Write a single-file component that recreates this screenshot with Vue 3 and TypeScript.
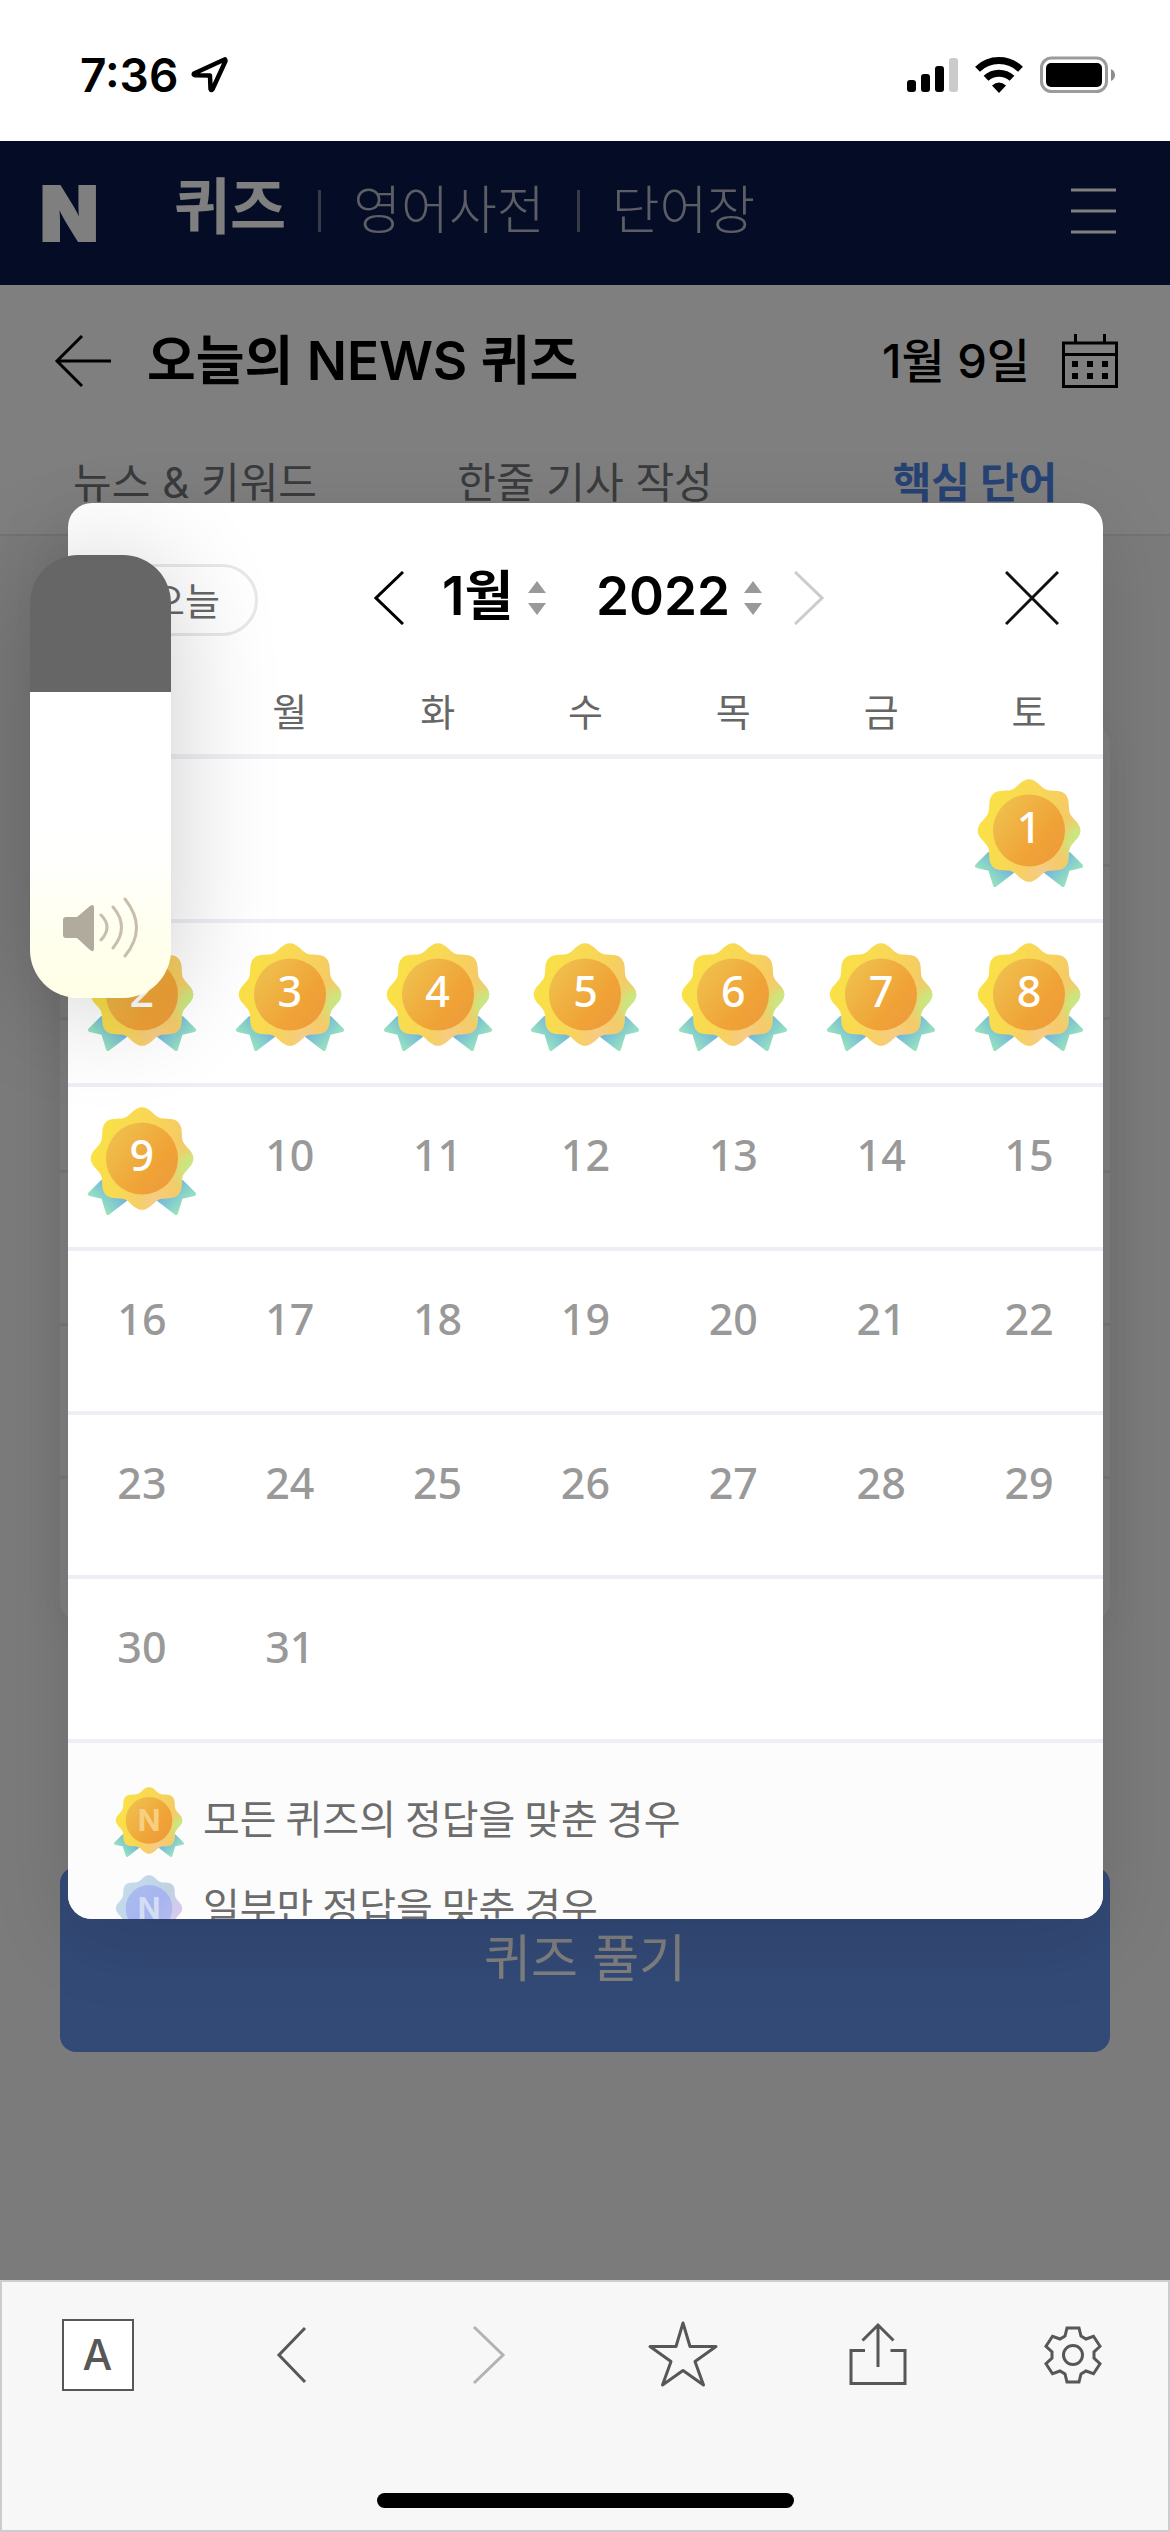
<script setup lang="ts">
import { computed, ref } from 'vue'

const weekdays = ['일', '월', '화', '수', '목', '금', '토']
const month = ref(1)
const year = ref(2022)
const volume = ref(69)
const lastSolvedDay = 9

const weeks = computed(() => {
  const offset = new Date(year.value, month.value - 1, 1).getDay()
  const total = new Date(year.value, month.value, 0).getDate()
  const cells: (number | null)[] = Array(offset).fill(null)
  for (let d = 1; d <= total; d++) cells.push(d)
  while (cells.length % 7) cells.push(null)
  const rows: (number | null)[][] = []
  for (let i = 0; i < cells.length; i += 7) rows.push(cells.slice(i, i + 7))
  return rows
})

// Eight-lobed rosette outline around (54, 51)
const rosette = Array.from({ length: 120 }, (_, i) => {
  const a = (i / 120) * Math.PI * 2
  const r = 47.8 + 3.5 * Math.cos(8 * a)
  return `${(54 + r * Math.cos(a)).toFixed(2)},${(51.5 + r * Math.sin(a)).toFixed(2)}`
}).join(' ')

const volumeFill = computed(() => ({
  background: `linear-gradient(to top, #ffffe6 0%, #ffffef 15%, #fffffd 31%, #fff 40%, #fff ${volume.value}%, #666 ${volume.value}%)`,
}))
</script>

<template>
  <div class="screen">
    <svg class="defs" width="0" height="0" aria-hidden="true">
      <defs>
        <linearGradient id="gold-leaf" x1="0" y1="0.3" x2="1" y2="0.6">
          <stop offset="0" stop-color="#fae343" />
          <stop offset="0.5" stop-color="#f8d657" />
          <stop offset="0.85" stop-color="#f5c967" />
        </linearGradient>
        <radialGradient id="gold-green" gradientUnits="userSpaceOnUse" cx="106" cy="62" r="32">
          <stop offset="0" stop-color="#b9f089" />
          <stop offset="0.4" stop-color="#c9e880" stop-opacity="0.8" />
          <stop offset="1" stop-color="#f5cb66" stop-opacity="0" />
        </radialGradient>
        <radialGradient id="gold-peach" gradientUnits="userSpaceOnUse" cx="66" cy="92" r="34">
          <stop offset="0" stop-color="#f6cc88" />
          <stop offset="1" stop-color="#f6cc66" stop-opacity="0" />
        </radialGradient>
        <linearGradient id="gold-core" x1="0" y1="0.1" x2="0.9" y2="0.8">
          <stop offset="0" stop-color="#efc350" />
          <stop offset="0.75" stop-color="#f0a236" />
          <stop offset="1" stop-color="#ee9d3a" />
        </linearGradient>
        <linearGradient id="tail-left" x1="0.9" y1="0.3" x2="0.2" y2="0.9">
          <stop offset="0.1" stop-color="#72b6dc" />
          <stop offset="1" stop-color="#9febb8" />
        </linearGradient>
        <linearGradient id="tail-right" x1="0.1" y1="0.3" x2="0.8" y2="0.9">
          <stop offset="0.1" stop-color="#72b6dc" />
          <stop offset="1" stop-color="#9febb8" />
        </linearGradient>
        <linearGradient id="silver-leaf" x1="0" y1="0" x2="1" y2="0.6">
          <stop offset="0" stop-color="#c6deef" />
          <stop offset="0.7" stop-color="#bfd2e2" />
          <stop offset="1" stop-color="#dcc8f2" />
        </linearGradient>
        <linearGradient id="silver-core" x1="0" y1="0" x2="1" y2="0.8">
          <stop offset="0" stop-color="#a9bdf0" />
          <stop offset="0.6" stop-color="#a8b4f0" />
          <stop offset="1" stop-color="#b4bcee" />
        </linearGradient>
        <symbol id="badge-gold" viewBox="0 0 108 108">
          <path d="M14 75 2 87l13 3 5 16 17-13Z" fill="url(#tail-left)" stroke="url(#tail-left)" stroke-width="4" stroke-linejoin="round" />
          <path d="m94 75 12 12-13 3-5 16-17-13Z" fill="url(#tail-right)" stroke="url(#tail-right)" stroke-width="4" stroke-linejoin="round" />
          <polygon :points="rosette" fill="url(#gold-leaf)" />
          <polygon :points="rosette" fill="url(#gold-peach)" />
          <polygon :points="rosette" fill="url(#gold-green)" />
          <circle cx="54" cy="51.5" r="36" fill="url(#gold-core)" />
        </symbol>
        <symbol id="badge-silver" viewBox="0 0 108 108">
          <polygon :points="rosette" fill="url(#silver-leaf)" />
          <circle cx="54" cy="51.5" r="36" fill="url(#silver-core)" />
        </symbol>
      </defs>
    </svg>

    <div class="status">
      <span class="clock">7:36</span>
      <svg class="locate" width="40" height="40" viewBox="0 0 40 40" aria-hidden="true">
        <path d="M34.500 4.500 4 18.500q-1 1.500 1 1.700L20 20.500 20.500 34q.5 2 2 .3L35.500 6q0-2-1-1.500Z" fill="none" stroke="#000" stroke-width="4.500" stroke-linejoin="round" />
      </svg>
      <svg class="signal" width="52" height="36" viewBox="0 0 52 36" aria-hidden="true">
        <rect x="0" y="23" width="9" height="12" rx="3" />
        <rect x="14" y="17" width="9" height="18" rx="3" />
        <rect x="28" y="9" width="9" height="26" rx="3" />
        <rect x="42" y="1" width="9" height="34" rx="3" fill="#cbcbcb" />
      </svg>
      <svg class="wifi" width="50" height="38" viewBox="0 0 50 38" aria-hidden="true">
        <path d="M3.500 13.200a31 31 0 0 1 43 0" fill="none" stroke="#000" stroke-width="7" />
        <path d="M12 22.300a19 19 0 0 1 26 0" fill="none" stroke="#000" stroke-width="7" />
        <path d="M18 29.500q7-6 14 0L25 37Z" />
      </svg>
      <svg class="battery" width="76" height="38" viewBox="0 0 76 38" aria-hidden="true">
        <rect x="1.500" y="2" width="65" height="33.500" rx="10" fill="none" stroke="#9b9b9b" stroke-width="3" />
        <rect x="6" y="7" width="56" height="24" rx="5" />
        <path d="M71 13q4 2 4 6t-4 6Z" fill="#8c8c8c" />
      </svg>
    </div>

    <div class="page">
      <header class="topbar">
        <a class="logo" href="#">N</a>
        <nav class="services">
          <a class="current" href="#">퀴즈</a>
          <a href="#">영어사전</a>
          <a href="#">단어장</a>
        </nav>
        <button class="plain menu" type="button" aria-label="메뉴">
          <svg width="45" height="46" viewBox="0 0 45 46"><path d="M0 2h45M0 23h45M0 44h45" stroke="#fff" stroke-width="3" /></svg>
        </button>
      </header>

      <div class="title-row">
        <a class="back" href="#" aria-label="뒤로">
          <svg width="58" height="54" viewBox="0 0 58 54"><path d="M28 2 3 27l25 25M3 27h54" fill="none" stroke="#000" stroke-width="3" /></svg>
        </a>
        <h1>오늘의 NEWS 퀴즈</h1>
        <span class="date">1월 9일</span>
        <button class="plain" type="button" aria-label="달력 열기">
          <svg width="56" height="54" viewBox="0 0 56 54">
            <path d="M1.500 9h53v43.500h-53ZM1.500 20.500h53M13.500 0v9M42.500 0v9" fill="none" stroke="#000" stroke-width="3" />
            <path d="M10 27h6v6h-6zM25 27h6v6h-6zM40 27h6v6h-6zM10 39h6v6h-6zM25 39h6v6h-6zM40 39h6v6h-6z" />
          </svg>
        </button>
      </div>

      <nav class="tabs">
        <a href="#">뉴스 &amp; 키워드</a>
        <a href="#">한줄 기사 작성</a>
        <a class="current" href="#">핵심 단어</a>
      </nav>

      <main class="content">
        <ul class="words">
          <li v-for="n in 6" :key="n"></li>
        </ul>
        <button class="solve" type="button">퀴즈 풀기</button>
      </main>

      <div class="dim">
        <section class="dialog" role="dialog" aria-label="달력">
          <div class="picker">
            <button class="today" type="button">오늘</button>
            <div class="period">
              <button class="plain" type="button" aria-label="이전 달">
                <svg width="30" height="54" viewBox="0 0 30 54"><path d="M29 1 2 27l27 26" fill="none" stroke="#000" stroke-width="3" /></svg>
              </button>
              <label class="choice month">
                <select v-model="month" aria-label="월">
                  <option v-for="m in 12" :key="m" :value="m">{{ m }}월</option>
                </select>
                <svg width="18" height="34" viewBox="0 0 18 34" aria-hidden="true"><path d="m9 0 9 12H0ZM9 34l9-12H0Z" fill="#999" /></svg>
              </label>
              <label class="choice year">
                <select v-model="year" aria-label="연도">
                  <option :value="2022">2022</option>
                  <option :value="2021">2021</option>
                </select>
                <svg width="18" height="34" viewBox="0 0 18 34" aria-hidden="true"><path d="m9 0 9 12H0ZM9 34l9-12H0Z" fill="#999" /></svg>
              </label>
              <button class="plain" type="button" aria-label="다음 달" disabled>
                <svg width="30" height="54" viewBox="0 0 30 54"><path d="m1 1 27 26L1 53" fill="none" stroke="#ccc" stroke-width="3" /></svg>
              </button>
            </div>
            <button class="plain close" type="button" aria-label="닫기">
              <svg width="54" height="54" viewBox="0 0 54 54"><path d="m1 1 52 52M53 1 1 53" fill="none" stroke="#111" stroke-width="3" /></svg>
            </button>
          </div>

          <table class="calendar">
            <thead>
              <tr>
                <th v-for="w in weekdays" :key="w" scope="col">{{ w }}</th>
              </tr>
            </thead>
            <tbody>
              <tr v-for="(week, i) in weeks" :key="i">
                <td v-for="(day, j) in week" :key="j">
                  <div v-if="day" class="day" :class="{ solved: day <= lastSolvedDay }">
                    <svg v-if="day <= lastSolvedDay" class="badge" aria-hidden="true"><use href="#badge-gold" /></svg>
                    <span>{{ day }}</span>
                  </div>
                </td>
              </tr>
            </tbody>
          </table>

          <ul class="legend">
            <li>
              <svg class="mark" viewBox="0 0 108 108" aria-hidden="true">
                <use href="#badge-gold" />
                <text class="mark-letter" x="54" y="68" fill="#f8cf80">N</text>
              </svg>
              <span>모든 퀴즈의 정답을 맞춘 경우</span>
            </li>
            <li>
              <svg class="mark" viewBox="0 0 108 108" aria-hidden="true">
                <use href="#badge-silver" />
                <text class="mark-letter" x="54" y="68" fill="#d3ddf3">N</text>
              </svg>
              <span>일부만 정답을 맞춘 경우</span>
            </li>
          </ul>
        </section>
      </div>
    </div>

    <div class="volume">
      <input v-model.number="volume" type="range" min="0" max="100" aria-label="음량" :style="volumeFill" />
      <svg width="80" height="64" viewBox="0 0 80 64" aria-hidden="true">
        <path d="M3 21h11L27 10q4-3 4 2v40q0 5-4 2L14 42H3q-3 0-3-3V24q0-3 3-3Z" fill="#b0ab9c" />
        <path d="M38 19q12 12 0 25M50 11q17 20 0 41M62 3q23 29 0 57" fill="none" stroke="#c6bfae" stroke-width="3" stroke-linecap="round" />
      </svg>
    </div>

    <footer class="toolbar">
      <div class="tools">
        <button class="plain" type="button"><span class="letter">A</span></button>
        <button class="plain" type="button" aria-label="뒤로 가기">
          <svg width="72" height="72" viewBox="0 0 72 72"><path d="M48 9 22 36l26 27" fill="none" stroke="#575757" stroke-width="3" /></svg>
        </button>
        <button class="plain" type="button" aria-label="앞으로 가기" disabled>
          <svg width="72" height="72" viewBox="0 0 72 72"><path d="m22 8 29 28-29 28" fill="none" stroke="#b3b3b3" stroke-width="3" /></svg>
        </button>
        <button class="plain" type="button" aria-label="즐겨찾기">
          <svg width="72" height="72" viewBox="0 0 72 72"><path d="m36 4 7 23.500h26L48 42.500 56.500 66 36 51.500 15.500 66 24 42.500 3 27.500h26Z" fill="none" stroke="#575757" stroke-width="3" stroke-linejoin="round" /></svg>
        </button>
        <button class="plain" type="button" aria-label="공유">
          <svg width="72" height="72" viewBox="0 0 72 72"><path d="M23 31.500H9v33h54v-33H48.500M36 48V6M20.500 21.500 36 6l15.500 15.500" fill="none" stroke="#575757" stroke-width="3" /></svg>
        </button>
        <button class="plain" type="button" aria-label="설정">
          <svg width="60" height="60" viewBox="0 0 60 60" fill="none" stroke="#575757" stroke-width="3">
            <path d="m24 3h12l2 8 5 3 7.500-2.700 6.500 10-6 5.700v6l6 5.700-6.500 10L43 46l-5 3-2 8H24l-2-8-5-3-7.500 2.700-6.500-10L9 33v-6l-6-5.700 6.500-10L17 14l5-3Z" />
            <circle cx="30" cy="30" r="9.500" />
          </svg>
        </button>
      </div>
      <div class="home-bar"></div>
    </footer>
  </div>
</template>

<style>
body {
  margin: 0;
  background: #fff;
}
</style>

<style scoped>
* {
  box-sizing: border-box;
}

.screen {
  position: relative;
  display: flex;
  flex-direction: column;
  height: 100vh;
  font-family: Inter, "Noto Sans CJK KR", sans-serif;
  color: #000;
}

.defs {
  position: absolute;
}

svg {
  display: block;
  flex: none;
}

a {
  color: inherit;
  text-decoration: none;
}

button,
select {
  font-family: inherit;
}

.plain {
  display: flex;
  align-items: center;
  justify-content: center;
  padding: 0;
  border: 0;
  background: none;
}

ul {
  margin: 0;
  padding: 0;
  list-style: none;
}

.status {
  display: flex;
  align-items: center;
  flex: none;
  height: 141px;
  padding: 8px 54px 0 80px;
}

.clock {
  font-size: 46px;
  font-weight: 600;
  line-height: 56px;
}

.locate {
  margin-left: 12px;
}

.signal {
  margin-left: auto;
}

.wifi {
  margin-left: 15px;
}

.battery {
  margin-left: 16px;
}

.page {
  position: relative;
  flex: 1;
  min-height: 0;
  overflow: hidden;
  background: #f6f6f7;
}

.topbar {
  display: flex;
  align-items: center;
  height: 144px;
  padding: 0 54px 4px 40px;
  background: #0a184c;
  color: #fff;
}

.logo {
  width: 134px;
  padding-top: 4px;
  font-size: 76px;
  font-weight: 900;
  line-height: 80px;
  -webkit-text-stroke: 2px #fff;
}

.services {
  display: flex;
  align-items: center;
}

.services a {
  font-size: 52px;
  font-weight: 300;
  line-height: 60px;
  color: #b8bbca;
}

.services a + a {
  display: flex;
  align-items: center;
}

.services a + a::before {
  content: "";
  width: 3px;
  height: 42px;
  margin: 0 32px;
  background: #70758f;
}

.services a.current {
  padding-bottom: 8px;
  font-size: 61px;
  font-weight: 700;
  color: #fff;
}

.menu {
  margin-left: auto;
}

.title-row {
  display: flex;
  align-items: center;
  height: 152px;
  padding: 0 52px 0 54px;
  background: #fff;
}

h1 {
  margin: 0 auto 0 35px;
  font-size: 53px;
  font-weight: 600;
  line-height: 60px;
}

.date {
  margin-right: 32px;
  font-size: 47px;
  font-weight: 500;
  line-height: 60px;
}

.tabs {
  display: flex;
  height: 99px;
  border-bottom: 2px solid #e4e6e8;
  background: #fff;
}

.tabs a {
  flex: 1;
  font-size: 42px;
  line-height: 92px;
  text-align: center;
  color: #74767a;
}

.tabs a.current {
  font-weight: 700;
  color: #4e86e8;
}

.content {
  padding: 189px 60px 0;
}

.words {
  border-radius: 20px;
  background: #fff;
  box-shadow: 0 8px 40px rgba(0, 0, 20, 0.06);
}

.words li {
  height: 153px;
  border-bottom: 3px solid #eceef0;
}

.words li:first-child {
  height: 142px;
}

.words li:last-child {
  height: 142px;
  border-bottom: 0;
}

.solve {
  width: 100%;
  height: 185px;
  margin-top: 246px;
  padding: 0 0 10px;
  border: 0;
  border-radius: 16px;
  background: #6694ee;
  font-size: 51px;
  font-weight: 400;
  color: #fff;
}

.dim {
  position: absolute;
  inset: 0;
  padding: 362px 67px 361px 68px;
  background: rgba(0, 0, 0, 0.5);
}

.dialog {
  height: 100%;
  overflow: hidden;
  border-radius: 24px;
  background: #fff;
  box-shadow: 0 20px 80px rgba(0, 0, 0, 0.12);
}

.picker {
  display: flex;
  align-items: center;
  padding: 61px 44px 30px;
}

.today {
  width: 146px;
  height: 72px;
  padding: 0 0 4px;
  border: 3px solid #e6e8eb;
  border-radius: 36px;
  background: #fff;
  font-size: 38px;
  color: #666;
}

.period {
  display: flex;
  align-items: center;
  height: 72px;
  margin-left: 116px;
  padding-bottom: 4px;
}

.choice {
  display: flex;
  align-items: center;
}

.choice.month {
  margin-left: 38px;
}

.choice.year {
  margin: 0 32px 0 50px;
}

select {
  padding: 0 0 4px;
  border: 0;
  appearance: none;
  background: none;
  font-size: 53px;
  font-weight: 600;
  color: #000;
}

.month select {
  width: 86px;
}

.year select {
  width: 148px;
}

.close {
  height: 72px;
  margin-left: auto;
  padding-bottom: 4px;
}

.calendar {
  width: 100%;
  border-spacing: 0;
  table-layout: fixed;
}

th {
  height: 93px;
  padding: 0 0 2px;
  border-bottom: 5px solid #eef0f3;
  font-size: 38px;
  font-weight: 400;
  color: #666;
}

td {
  height: 164px;
  padding: 20px 0 0;
  border-bottom: 4px solid #eeeff4;
  vertical-align: top;
}

.day {
  position: relative;
  display: flex;
  align-items: center;
  justify-content: center;
  width: 108px;
  height: 94px;
  margin: 0 auto;
  font-family: "Noto Sans", sans-serif;
  font-size: 43px;
  font-weight: 500;
  color: #999;
}

.day.solved {
  color: #fff;
}

.badge {
  position: absolute;
  top: 0;
  left: 0;
  width: 108px;
  height: 108px;
}

.day span {
  position: relative;
}

.legend {
  display: flex;
  flex-direction: column;
  gap: 18px;
  height: 400px;
  padding: 44px 46px;
  background: #fcfcfc;
}

.legend li {
  display: flex;
  align-items: center;
  gap: 19px;
  height: 70px;
  font-family: "Noto Sans CJK KR", sans-serif;
  font-size: 40px;
  line-height: 60px;
  font-weight: 400;
  color: #6c6c6c;
}

.legend span {
  padding-bottom: 10px;
}

.mark {
  width: 70px;
  height: 70px;
}

.mark-letter {
  font-family: Inter, sans-serif;
  font-size: 46px;
  font-weight: 700;
  text-anchor: middle;
}

.volume {
  position: absolute;
  top: 555px;
  left: 30px;
  width: 141px;
  height: 443px;
  border-radius: 48px;
  box-shadow: 0 10px 110px rgba(0, 0, 0, 0.2);
}

.volume input {
  display: block;
  width: 100%;
  height: 100%;
  margin: 0;
  border-radius: 48px;
  appearance: none;
  writing-mode: vertical-lr;
  direction: rtl;
}

.volume input::-webkit-slider-thumb {
  width: 1px;
  height: 1px;
  appearance: none;
}

.volume svg {
  position: absolute;
  bottom: 38px;
  left: 33px;
}

.toolbar {
  display: flex;
  flex: none;
  flex-direction: column;
  justify-content: space-between;
  height: 252px;
  padding: 37px 0 22px;
  border: 2px solid #cccdce;
  background: #f7f7f8;
}

.tools {
  display: flex;
  margin: 0 -2px;
}

.tools .plain {
  flex: 1;
  height: 72px;
}

.letter {
  width: 72px;
  height: 72px;
  border: 2px solid #575757;
  background: #fff;
  font-size: 42px;
  font-weight: 500;
  line-height: 68px;
  color: #575757;
}

.home-bar {
  align-self: center;
  width: 417px;
  height: 15px;
  border-radius: 8px;
  background: #000;
}
</style>
